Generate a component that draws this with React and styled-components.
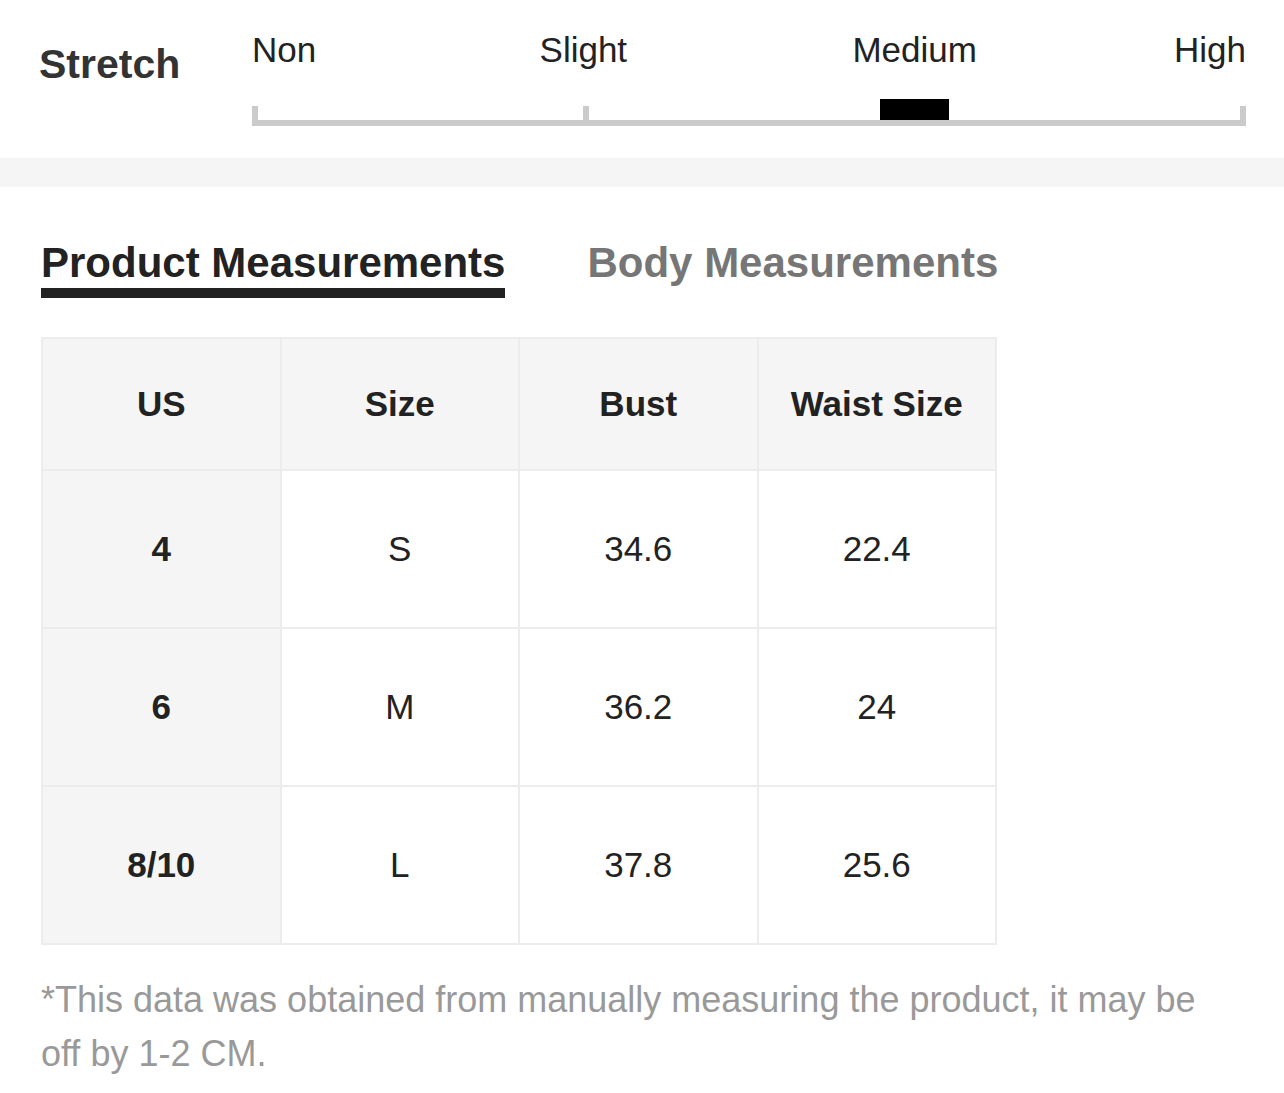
import React from "react";
import styled, { createGlobalStyle } from "styled-components";

const GlobalStyle = createGlobalStyle`
  body {
    margin: 0;
    background: #fff;
    font-family: "Liberation Sans", Arial, Helvetica, sans-serif;
    color: #222;
  }
`;

const levels = ["Non", "Slight", "Medium", "High"];

const headers = ["US", "Size", "Bust", "Waist Size"];

const rows = [
  ["4", "S", "34.6", "22.4"],
  ["6", "M", "36.2", "24"],
  ["8/10", "L", "37.8", "25.6"],
];

const App = () => {
  const active = 2;

  return (
    <Page>
      <GlobalStyle />
      <StretchSection>
        <StretchTitle>Stretch</StretchTitle>
        <Scale>
          <Labels>
            {levels.map((label, i) => (
              <Level key={label} $pos={i}>
                {label}
              </Level>
            ))}
          </Labels>
          <Track>
            <Segment $first />
            <Segment $tick />
            <Segment $last />
            <Marker style={{ left: `${(active / 3) * 100}%` }} />
          </Track>
        </Scale>
      </StretchSection>

      <Divider />

      <Content>
        <Tabs>
          <Tab $active>Product Measurements</Tab>
          <Tab>Body Measurements</Tab>
        </Tabs>

        <Table>
          <thead>
            <tr>
              {headers.map((h) => (
                <HeadCell key={h}>{h}</HeadCell>
              ))}
            </tr>
          </thead>
          <tbody>
            {rows.map((row) => (
              <tr key={row[0]}>
                {row.map((value, i) => (
                  <Cell key={i} $key={i === 0}>
                    {value}
                  </Cell>
                ))}
              </tr>
            ))}
          </tbody>
        </Table>

        <Footnote>
          *This data was obtained from manually measuring the product, it may be
          off by 1-2 CM.
        </Footnote>
      </Content>
    </Page>
  );
};

export default App;

const Page = styled.div`
  width: 1284px;
`;

const StretchSection = styled.section`
  display: flex;
  height: 158px;
  padding: 0 38px 0 39px;
  box-sizing: border-box;
`;

const StretchTitle = styled.h2`
  width: 213px;
  margin: 44px 0 0;
  font-size: 41px;
  line-height: 41px;
  font-weight: 700;
  color: #333;
`;

const Scale = styled.div`
  flex: 1;
  padding-top: 32px;
`;

const Labels = styled.div`
  display: grid;
  grid-template-columns: repeat(6, 1fr);
  height: 74px;
`;

const Level = styled.span`
  font-size: 35px;
  line-height: 35px;
  color: #222;
  grid-column: ${({ $pos }) =>
    $pos === 0 ? "1" : $pos === 1 ? "2 / span 2" : $pos === 2 ? "4 / span 2" : "6"};
  justify-self: ${({ $pos }) =>
    $pos === 0 ? "start" : $pos === 3 ? "end" : "center"};
`;

const Track = styled.div`
  position: relative;
  display: grid;
  grid-template-columns: repeat(3, 1fr);
  height: 20px;
`;

const Segment = styled.div`
  border-bottom: 6px solid #cbcbcb;
  border-left: ${({ $first, $tick }) =>
    $first || $tick ? "6px solid #cbcbcb" : "none"};
  border-right: ${({ $last }) => ($last ? "6px solid #cbcbcb" : "none")};
`;

const Marker = styled.span`
  position: absolute;
  top: -7px;
  width: 69px;
  height: 21px;
  margin-left: -35px;
  background: #000;
`;

const Divider = styled.div`
  height: 29px;
  background: #f5f5f5;
`;

const Content = styled.main`
  padding: 0 50px 40px 41px;
`;

const Tabs = styled.nav`
  display: flex;
  gap: 82px;
  margin-top: 55px;
`;

const Tab = styled.div`
  font-size: 42px;
  line-height: 42px;
  font-weight: 700;
  padding-bottom: 4px;
  color: ${({ $active }) => ($active ? "#222" : "#767676")};
  border-bottom: 10px solid ${({ $active }) => ($active ? "#222" : "transparent")};
`;

const Table = styled.table`
  width: 956px;
  margin: 39px 0 0;
  border-collapse: collapse;
  table-layout: fixed;
`;

const HeadCell = styled.th`
  height: 130px;
  padding: 0;
  border: 2px solid #ececec;
  background: #f5f5f5;
  font-size: 35px;
  font-weight: 700;
  color: #222;
  text-align: center;
  vertical-align: middle;
`;

const Cell = styled.td`
  height: 156px;
  padding: 0;
  border: 2px solid #ececec;
  background: ${({ $key }) => ($key ? "#f5f5f5" : "#fff")};
  font-size: 35px;
  font-weight: ${({ $key }) => ($key ? 700 : 400)};
  color: #222;
  text-align: center;
  vertical-align: middle;
`;

const Footnote = styled.p`
  width: 1180px;
  margin: 28px 0 0;
  font-size: 36px;
  line-height: 54px;
  color: #999;
`;
